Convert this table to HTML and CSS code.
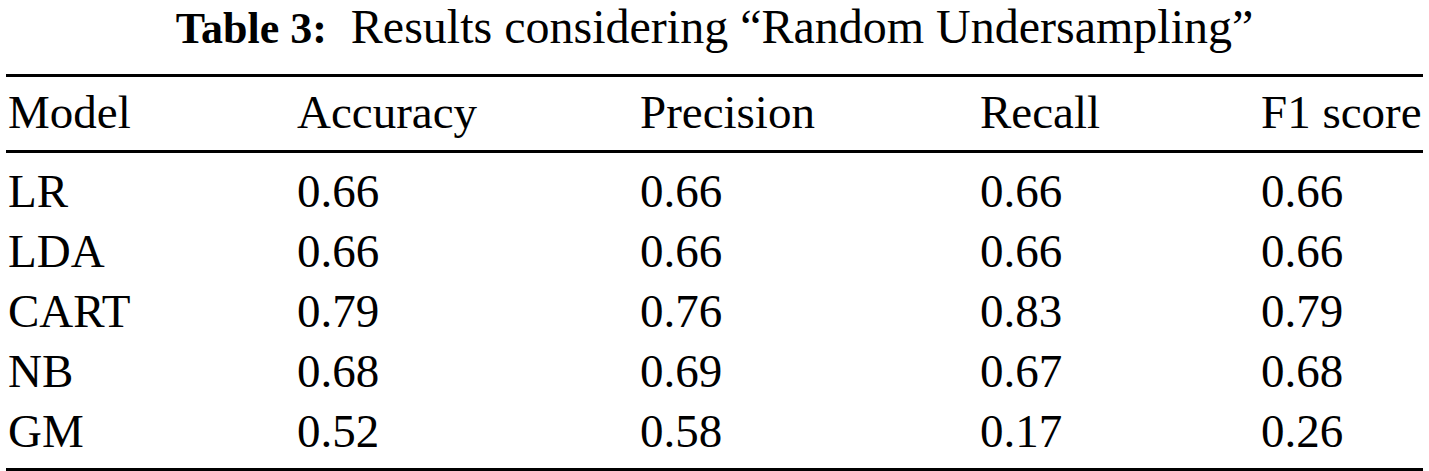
FILE: index.html
```html
<!DOCTYPE html>
<html>
<head>
    <meta charset="UTF-8">
    <title>Table 3</title>
    <link rel="stylesheet" href="styles.css">
</head>
<body>
    <div class="page">
        <p class="caption"><b>Table 3:</b>&nbsp; Results considering “Random Undersampling”</p>

        <div class="results">
            <div class="row head">
                <span>Model</span>
                <span>Accuracy</span>
                <span>Precision</span>
                <span>Recall</span>
                <span>F1 score</span>
            </div>
            <div class="rows">
                <div class="row"><span>LR</span><span>0.66</span><span>0.66</span><span>0.66</span><span>0.66</span></div>
                <div class="row"><span>LDA</span><span>0.66</span><span>0.66</span><span>0.66</span><span>0.66</span></div>
                <div class="row"><span>CART</span><span>0.79</span><span>0.76</span><span>0.83</span><span>0.79</span></div>
                <div class="row"><span>NB</span><span>0.68</span><span>0.69</span><span>0.67</span><span>0.68</span></div>
                <div class="row"><span>GM</span><span>0.52</span><span>0.58</span><span>0.17</span><span>0.26</span></div>
            </div>
        </div>
    </div>
</body>
</html>
```

FILE: styles.css
```css
body {
    margin: 0;
    background: #fff;
    color: #000;
    font-family: 'Liberation Serif', 'Times New Roman', serif;
}
.page {
    width: 1429px;
}
.caption {
    margin: 0 0 18px;
    font-size: 48px;
    line-height: 54px;
    text-align: center;
}
.caption b {
    font-size: 44px;
}
.results {
    margin: 0 6px;
    border-top: 3px solid #000;
    border-bottom: 3px solid #000;
}
.row {
    display: grid;
    grid-template-columns: 289px 343px 340px 281px 1fr;
    padding-left: 2px;
    font-size: 47px;
    line-height: 60px;
    white-space: nowrap;
}
.row.head {
    padding-top: 5px;
    padding-bottom: 8px;
    border-bottom: 3px solid #000;
}
.rows {
    padding: 8px 0 7px;
}
```
